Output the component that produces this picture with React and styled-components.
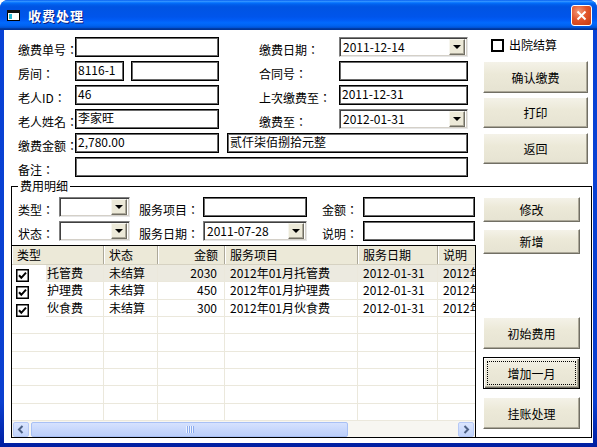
import React from "react";
import styled, { createGlobalStyle } from "styled-components";

const GlobalStyle = createGlobalStyle`
  * { box-sizing: border-box; }
  html, body { margin: 0; padding: 0; background: #ffffff; }
  body {
    font-family: "Noto Sans CJK SC", "DejaVu Sans", sans-serif;
    font-size: 12px;
    color: #000;
  }
`;

const Window = styled.div`
  width: 597px;
  height: 447px;
  display: flex;
  flex-direction: column;
  background: linear-gradient(180deg, #0842d6 0%, #0a3fd0 90%, #001ea0 100%);
  border-radius: 8px 8px 0 0;
  overflow: hidden;
`;

const TitleBar = styled.div`
  height: 30px;
  flex: none;
  display: flex;
  align-items: center;
  padding: 0 5px 0 7px;
  background: linear-gradient(
    180deg,
    #0058ee 0%,
    #3593ff 4%,
    #288eff 6%,
    #127dff 8%,
    #036ffc 10%,
    #0262ee 14%,
    #0057e5 20%,
    #0054e3 24%,
    #0055eb 56%,
    #005bf5 66%,
    #026afe 76%,
    #0062ef 86%,
    #0052d6 92%,
    #0040ab 94%,
    #003092 100%
  );
`;

const TitleText = styled.span`
  margin-left: 8px;
  color: #fff;
  font-weight: 700;
  font-size: 13px;
  letter-spacing: 1px;
  text-shadow: 1px 1px #0a1e82;
`;

const CloseButton = styled.div`
  margin-left: auto;
  width: 21px;
  height: 21px;
  border: 1px solid #fff;
  border-radius: 3px;
  background: radial-gradient(circle at 35% 30%, #f39a7a 0%, #e2552c 45%, #c63a0f 100%);
  display: flex;
  align-items: center;
  justify-content: center;
`;

const Body = styled.div`
  flex: 1;
  min-height: 0;
  margin: 0 4px 4px;
  background: #fff;
  display: flex;
  flex-direction: column;
`;

const TopSection = styled.div`
  display: flex;
  gap: 15px;
  padding: 7px 0 0 14px;
`;

const FormGrid = styled.div`
  display: grid;
  grid-template-columns: 57px 49px 7px 88px 8px 32px 80px 129px;
  grid-auto-rows: 20px;
  row-gap: 4px;
`;

const Label = styled.span`
  grid-column: ${(p) => p.$col || "auto"};
  align-self: end;
  line-height: 14px;
  white-space: nowrap;
  font-family: "Noto Sans CJK TC", "Noto Sans CJK SC", sans-serif;
`;

const TextBox = styled.div`
  grid-column: ${(p) => p.$col || "auto"};
  height: 20px;
  border: 1px solid #000;
  box-shadow: inset 0 0 0 1px #6a6a6a;
  padding: 0 2px;
  line-height: 16px;
  white-space: nowrap;
  overflow: hidden;
  background: #fff;
`;

const Combo = styled.div`
  grid-column: ${(p) => p.$col || "auto"};
  height: 20px;
  display: flex;
  align-items: center;
  padding: 0 1px 0 3px;
  background: #fff;
  border: 1px solid;
  border-color: #7f7f7f #e6e6e6 #e6e6e6 #7f7f7f;
  box-shadow: inset 1px 1px #404040, inset -1px -1px #d4d0c8;
`;

const ComboText = styled.span`
  flex: 1;
  line-height: 16px;
  white-space: nowrap;
`;

const DropButton = styled.span`
  width: 16px;
  height: 16px;
  margin-right: 1px;
  background: #ece9d8;
  border: 1px solid;
  border-color: #f7f6ef #716f64 #716f64 #f7f6ef;
  box-shadow: inset -1px -1px #aca899;
  display: flex;
  align-items: center;
  justify-content: center;
`;

const DownArrow = styled.span`
  width: 0;
  height: 0;
  border-left: 4px solid transparent;
  border-right: 4px solid transparent;
  border-top: 4px solid #000;
`;

const SideColumn = styled.div`
  width: 105px;
  display: flex;
  flex-direction: column;
`;

const CheckRow = styled.label`
  height: 20px;
  display: flex;
  align-items: flex-start;
  gap: 5px;
  padding: 1px 0 0 8px;
  line-height: 14px;
`;

const CheckBox = styled.span`
  width: 13px;
  height: 13px;
  margin-top: 1px;
  border: 2px solid #000;
  background: #fff;
`;

const PushButton = styled.div`
  position: relative;
  width: 100%;
  height: ${(p) => p.$h || 31}px;
  margin-top: ${(p) => p.$mt || 0}px;
  flex: none;
  display: flex;
  align-items: center;
  justify-content: center;
  background: linear-gradient(180deg, #f4f2e8 0%, #ece9d8 40%, #e6e3d2 100%);
  border: 1px solid;
  border-color: ${(p) => (p.$focused ? "#000" : "#fff #716f64 #716f64 #fff")};
  box-shadow: ${(p) =>
    p.$focused
      ? "inset 1px 1px #fff, inset -1px -1px #716f64, inset -2px -2px #aca899"
      : "inset -1px -1px #aca899"};
  font-size: 12px;
  &::after {
    content: "";
    display: ${(p) => (p.$focused ? "block" : "none")};
    position: absolute;
    inset: 3px;
    border: 1px dotted #000;
  }
`;

const GroupBox = styled.fieldset`
  flex: 1;
  min-height: 0;
  min-width: 0;
  margin: 2px 1px 5px 7px;
  padding: 0;
  border: 1px solid #000;
  display: flex;
`;

const Legend = styled.legend`
  margin-left: 6px;
  padding: 0 2px;
  font-size: 12px;
  line-height: 14px;
`;

const LeftPane = styled.div`
  width: 464px;
  display: flex;
  flex-direction: column;
`;

const FilterGrid = styled.div`
  display: grid;
  grid-template-columns: 41px 71px 9px 64px 104px 15px 41px 112px;
  grid-auto-rows: 20px;
  row-gap: 4px;
  margin: 4px 0 4px 6px;
`;

const DataGrid = styled.div`
  flex: 1;
  min-height: 0;
  margin: 0 0 -1px -1px;
  border: 1px solid #000;
  display: flex;
  flex-direction: column;
  overflow: hidden;
  background: #fff;
`;

const Viewport = styled.div`
  flex: 1;
  min-height: 0;
  overflow: hidden;
`;

const gridColumns = "34px 58px 54px 67px 133px 80px 140px";

const HeaderRow = styled.div`
  display: grid;
  grid-template-columns: ${gridColumns};
  height: 19px;
  background: #ece9d8;
  border-bottom: 1px solid #d6d2c2;
`;

const HeaderCell = styled.div`
  grid-column: ${(p) => p.$span || "auto"};
  padding: 0 6px 0 5px;
  line-height: 18px;
  text-align: ${(p) => p.$align || "left"};
  border-right: 1px solid #aca899;
  box-shadow: inset 1px 0 #fff;
  white-space: nowrap;
  overflow: hidden;
`;

const Row = styled.div`
  display: grid;
  grid-template-columns: ${gridColumns};
  height: 17.33px;
  background: ${(p) => (p.$selected ? "#eceae0" : "#fff")};
  border-bottom: 1px solid #ebe8dc;
`;

const Cell = styled.div`
  padding: ${(p) => (p.$align === "right" ? "0 7px 0 0" : "0 0 0 5px")};
  line-height: 16px;
  text-align: ${(p) => p.$align || "left"};
  border-right: ${(p) => (p.$open ? "none" : "1px solid #ebe8dc")};
  white-space: nowrap;
  overflow: hidden;
`;

const TickCell = styled.div`
  background: #fff;
  padding: 3px 0 0 4px;
`;

const NameCell = styled(Cell)`
  padding-left: 1px;
`;

const ScrollBar = styled.div`
  height: 16px;
  flex: none;
  display: flex;
  align-items: center;
  padding: 0 1px;
  background: #f7f6f1;
`;

const ArrowButton = styled.div`
  width: 16px;
  height: 15px;
  flex: none;
  border: 1px solid #b6c9f6;
  border-radius: 2px;
  background: linear-gradient(180deg, #dbe6fe 0%, #c1d3fb 100%);
  display: flex;
  align-items: center;
  justify-content: center;
`;

const Thumb = styled.div`
  width: 317px;
  height: 15px;
  margin-left: 2px;
  flex: none;
  border: 1px solid #a8c0f5;
  border-radius: 2px;
  background: linear-gradient(180deg, #d6e2fe 0%, #c8d8fc 50%, #bccffa 100%);
  display: flex;
  align-items: center;
  justify-content: center;
`;

const Track = styled.div`
  flex: 1;
`;

const ButtonColumn = styled.div`
  width: 97px;
  margin-left: 7px;
  display: flex;
  flex-direction: column;
  padding: 4px 0 8px;
`;

const Spacer = styled.div`
  flex: 1;
`;

const rows = [
  { name: "托管费", state: "未结算", amount: 2030, item: "2012年01月托管费", date: "2012-01-31" },
  { name: "护理费", state: "未结算", amount: 450, item: "2012年01月护理费", date: "2012-01-31" },
  { name: "伙食费", state: "未结算", amount: 300, item: "2012年01月伙食费", date: "2012-01-31" },
];

const ComboBox = ({ col, value }) => (
  <Combo $col={col}>
    <ComboText>{value}</ComboText>
    <DropButton>
      <DownArrow />
    </DropButton>
  </Combo>
);

const Tick = () => (
  <svg width="13" height="13" viewBox="0 0 13 13">
    <rect x="0.75" y="0.75" width="11.5" height="11.5" fill="#fff" stroke="#000" strokeWidth="1.5" />
    <path d="M3 6.3 L5.3 8.8 L10 3.6" fill="none" stroke="#000" strokeWidth="2" />
  </svg>
);

const Chevron = ({ dir }) => (
  <svg width="8" height="9" viewBox="0 0 8 9">
    <path
      d={dir === "left" ? "M5.5 1 L2 4.5 L5.5 8" : "M2.5 1 L6 4.5 L2.5 8"}
      fill="none"
      stroke="#4d6185"
      strokeWidth="2"
    />
  </svg>
);

export default function App() {
  const emptyRows = Array.from({ length: 6 });

  return (
    <>
      <GlobalStyle />
      <Window>
        <TitleBar>
          <svg width="13" height="12" viewBox="0 0 13 12">
            <rect x="0.5" y="1.5" width="12" height="10" fill="#fff" stroke="#000" />
            <rect x="0" y="1" width="13" height="3" fill="#111" />
            <rect x="2" y="5" width="3" height="5" fill="#27b9d6" />
          </svg>
          <TitleText>收费处理</TitleText>
          <CloseButton>
            <svg width="11" height="11" viewBox="0 0 11 11">
              <path d="M1.5 1.5 L9.5 9.5 M9.5 1.5 L1.5 9.5" stroke="#fff" strokeWidth="2" />
            </svg>
          </CloseButton>
        </TitleBar>

        <Body>
          <TopSection>
            <FormGrid>
              <Label $col="1">缴费单号：</Label>
              <TextBox $col="2 / 5" />
              <Label $col="7">缴费日期：</Label>
              <ComboBox col="8" value="2011-12-14" />

              <Label $col="1">房间：</Label>
              <TextBox $col="2">8116-1</TextBox>
              <TextBox $col="4" />
              <Label $col="7">合同号：</Label>
              <TextBox $col="8" />

              <Label $col="1">老人ID：</Label>
              <TextBox $col="2 / 5">46</TextBox>
              <Label $col="7">上次缴费至：</Label>
              <TextBox $col="8">2011-12-31</TextBox>

              <Label $col="1">老人姓名：</Label>
              <TextBox $col="2 / 5">李家旺</TextBox>
              <Label $col="7">缴费至：</Label>
              <ComboBox col="8" value="2012-01-31" />

              <Label $col="1">缴费金额：</Label>
              <TextBox $col="2 / 5">2,780.00</TextBox>
              <TextBox $col="6 / 9">贰仟柒佰捌拾元整</TextBox>

              <Label $col="1">备注：</Label>
              <TextBox $col="2 / 9" />
            </FormGrid>

            <SideColumn>
              <CheckRow>
                <CheckBox />
                出院结算
              </CheckRow>
              <PushButton $h={32} $mt={4}>确认缴费</PushButton>
              <PushButton $h={31} $mt={4}>打印</PushButton>
              <PushButton $h={31} $mt={5}>返回</PushButton>
            </SideColumn>
          </TopSection>

          <GroupBox>
            <Legend>费用明细</Legend>
            <LeftPane>
              <FilterGrid>
                <Label $col="1">类型：</Label>
                <ComboBox col="2" value="" />
                <Label $col="4">服务项目：</Label>
                <TextBox $col="5" />
                <Label $col="7">金额：</Label>
                <TextBox $col="8" />

                <Label $col="1">状态：</Label>
                <ComboBox col="2" value="" />
                <Label $col="4">服务日期：</Label>
                <ComboBox col="5" value="2011-07-28" />
                <Label $col="7">说明：</Label>
                <TextBox $col="8" />
              </FilterGrid>

              <DataGrid>
                <Viewport>
                  <HeaderRow>
                    <HeaderCell $span="1 / 3">类型</HeaderCell>
                    <HeaderCell>状态</HeaderCell>
                    <HeaderCell $align="right">金额</HeaderCell>
                    <HeaderCell>服务项目</HeaderCell>
                    <HeaderCell>服务日期</HeaderCell>
                    <HeaderCell>说明</HeaderCell>
                  </HeaderRow>
                  {rows.map((r, i) => (
                    <Row key={r.name} $selected={i === 0}>
                      <TickCell>
                        <Tick />
                      </TickCell>
                      <NameCell>{r.name}</NameCell>
                      <Cell>{r.state}</Cell>
                      <Cell $align="right">{r.amount}</Cell>
                      <Cell>{r.item}</Cell>
                      <Cell>{r.date}</Cell>
                      <Cell $open>{r.item}</Cell>
                    </Row>
                  ))}
                  {emptyRows.map((_, i) => (
                    <Row key={"e" + i}>
                      <TickCell />
                      <NameCell />
                      <Cell />
                      <Cell />
                      <Cell />
                      <Cell />
                      <Cell $open />
                    </Row>
                  ))}
                </Viewport>
                <ScrollBar>
                  <ArrowButton>
                    <Chevron dir="left" />
                  </ArrowButton>
                  <Thumb>
                    <svg width="8" height="7" viewBox="0 0 8 7">
                      {[0, 2, 4, 6].map((x) => (
                        <rect key={x} x={x} y="0" width="1" height="7" fill="#eef3fe" />
                      ))}
                      {[1, 3, 5, 7].map((x) => (
                        <rect key={x} x={x} y="0" width="1" height="7" fill="#8cacee" />
                      ))}
                    </svg>
                  </Thumb>
                  <Track />
                  <ArrowButton>
                    <Chevron dir="right" />
                  </ArrowButton>
                </ScrollBar>
              </DataGrid>
            </LeftPane>

            <ButtonColumn>
              <PushButton $h={25}>修改</PushButton>
              <PushButton $h={25} $mt={7}>新增</PushButton>
              <Spacer />
              <PushButton $h={32}>初始费用</PushButton>
              <PushButton $h={32} $mt={8} $focused>增加一月</PushButton>
              <PushButton $h={32} $mt={8}>挂账处理</PushButton>
            </ButtonColumn>
          </GroupBox>
        </Body>
      </Window>
    </>
  );
}
